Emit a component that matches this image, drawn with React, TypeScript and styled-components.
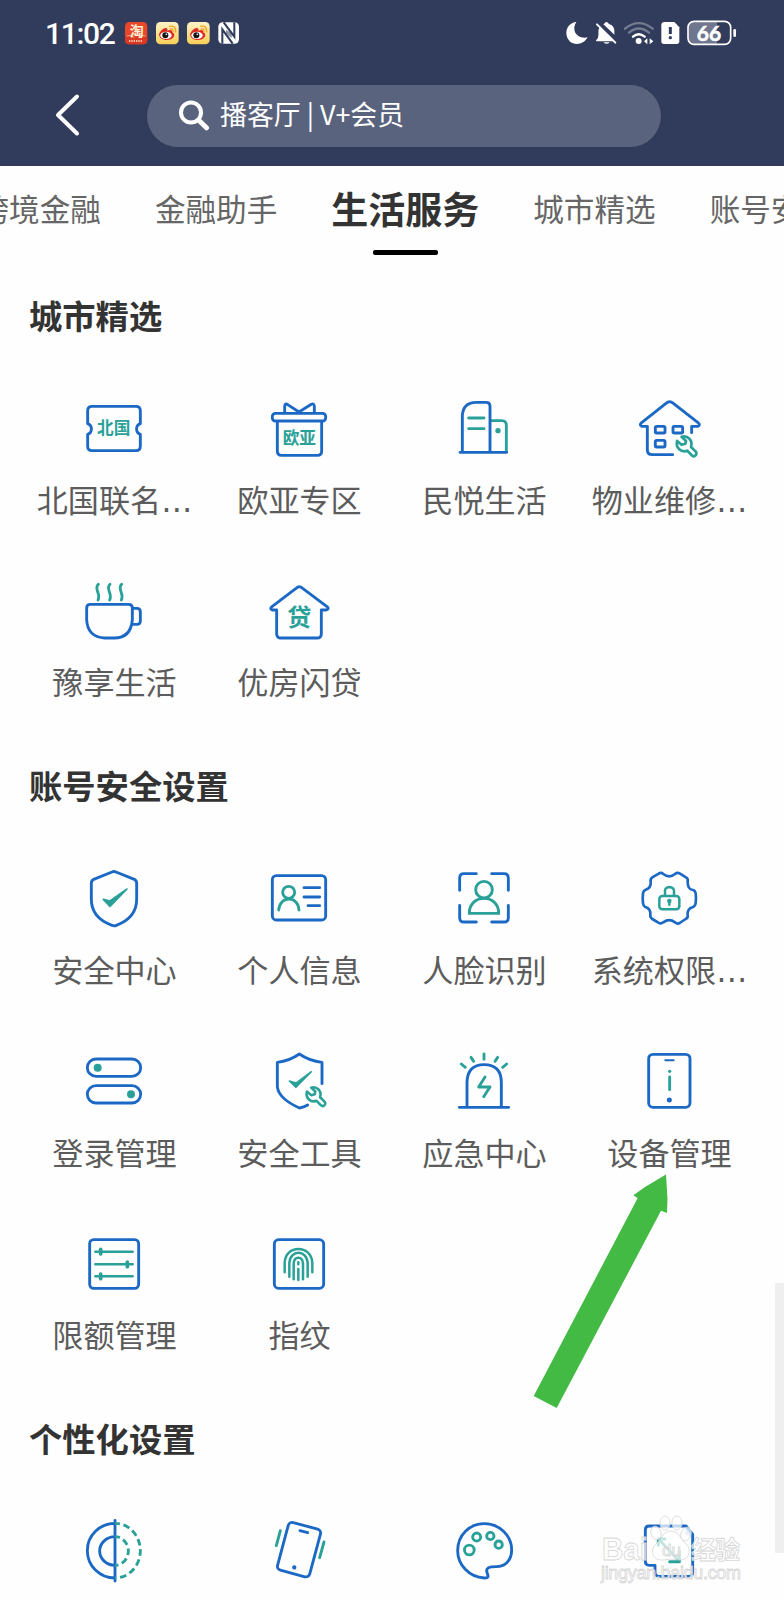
import React from "react";
import styled, { createGlobalStyle } from "styled-components";

const BLUE = "#1b69c5";
const TEAL = "#2aa198";
const CJK = '"Noto Sans CJK SC", sans-serif';

const GlobalStyle = createGlobalStyle`
  * { box-sizing: border-box; }
  body { margin: 0; background: #fefefe; font-family: ${CJK}; }
`;

const Screen = styled.div`
  position: relative;
  width: 784px;
  height: 1600px;
  overflow: hidden;
  background: #fefefe;
  display: flex;
  flex-direction: column;
`;

const Header = styled.header`
  flex: none;
  height: 166px;
  background: #313b5b;
`;

const StatusBar = styled.div`
  height: 66px;
  padding: 0 47px 0 45px;
  display: flex;
  align-items: center;
`;

const Clock = styled.span`
  width: 80px;
  padding-top: 1px;
  font: 500 30px/30px Roboto, sans-serif;
  letter-spacing: -1.3px;
  color: #fff;
`;

const Group = styled.div<{ $gap: number }>`
  display: flex;
  align-items: center;
  gap: ${(p) => p.$gap}px;
`;

const RightGroup = styled(Group)`
  margin-left: auto;
`;

const Art = styled.svg`
  display: block;
  flex: none;
`;

const SearchRow = styled.div`
  display: flex;
  align-items: center;
  padding: 19px 0 0 51px;
`;

const BackButton = styled.button`
  width: 96px;
  height: 62px;
  padding: 0;
  border: 0;
  background: none;
`;

const SearchPill = styled.div`
  width: 514px;
  height: 62px;
  border-radius: 31px;
  background: #5a637d;
  display: flex;
  align-items: center;
  padding-left: 31px;
  gap: 10px;
  color: #fff;
  font-size: 26.9px;
  line-height: 40px;
  white-space: pre;
`;

const Query = styled.span`
  padding-bottom: 4px;
`;

const Tabs = styled.nav`
  flex: none;
  height: 125.3px;
  margin-left: -21.5px;
  display: flex;
  gap: 54px;
  white-space: nowrap;
`;

const Tab = styled.div<{ $active?: boolean }>`
  flex: none;
  display: flex;
  flex-direction: column;
  align-items: center;
  font-size: ${(p) => (p.$active ? 37 : 30.6)}px;
  font-weight: ${(p) => (p.$active ? 700 : 400)};
  line-height: 84px;
  color: ${(p) => (p.$active ? "#333" : "#666")};
  &::after {
    content: "";
    display: ${(p) => (p.$active ? "block" : "none")};
    width: 65px;
    height: 5px;
    border-radius: 2px;
    background: #000;
  }
`;

const Section = styled.section`
  flex: none;
  padding: 3.3px 22px 0;
`;

const SectionTitle = styled.h2`
  margin: 0 0 61.5px 7px;
  font-size: 33.3px;
  line-height: 40px;
  font-weight: 700;
  color: #333;
`;

const Grid = styled.div`
  display: grid;
  grid-template-columns: repeat(4, 185px);
  grid-auto-rows: 182.7px;
`;

const Entry = styled.div`
  display: flex;
  flex-direction: column;
  align-items: center;
  gap: 18.6px;
`;

const Label = styled.div`
  height: 40px;
  font-size: 31.1px;
  line-height: 40px;
  white-space: nowrap;
  color: #5c5c5c;
`;

const Dots = styled.span`
  font-family: "DejaVu Sans", sans-serif;
`;

const Overlay = styled.svg`
  position: absolute;
  left: 0;
  top: 0;
  pointer-events: none;
`;

const ScrollThumb = styled.div`
  position: absolute;
  right: 0;
  top: 1283px;
  width: 9px;
  height: 270px;
  background: #efefef;
`;

const Glyph = ({ x, y, children }: { x: number; y: number; children: React.ReactNode }) => (
  <Art
    width="64"
    height="64"
    viewBox={`${x + 3} ${y} 192 192`}
    fill="none"
    stroke={BLUE}
    strokeWidth="8.6"
    strokeLinecap="round"
    strokeLinejoin="round"
    overflow="visible"
  >
    {children}
  </Art>
);

const Word = ({ x, y, size, children }: { x: number; y: number; size: number; children: string }) => (
  <text x={x} y={y} fontSize={size} fontWeight="700" fontFamily={CJK} fill={TEAL} stroke="none" textAnchor="middle">
    {children}
  </text>
);

const wrench =
  "M846 171 C866 166 882 182 876 203 L890 217 A8 8 0 0 1 879 230 L864 215 C845 222 826 206 832 184 L846 196 L858 193 L860 184 Z";

const icons: Record<string, React.ReactNode> = {
  ticket: (
    <Glyph x={186} y={48}>
      <path d="M216 79H348Q361 79 361 92V131A17 17 0 0 0 361 163V199Q361 212 348 212H216Q203 212 203 199V163A17 17 0 0 0 203 131V92Q203 79 216 79Z" />
      <Word x={281} y={163} size={50}>北国</Word>
    </Glyph>
  ),
  gift: (
    <Glyph x={741} y={48}>
      <rect x="757" y="100" width="160" height="23" rx="9" />
      <path d="M772 124V213Q772 226 785 226H892Q905 226 905 213V124M794 97V79Q795 68 803 74L837 96L874 73Q882 69 883 79V97" />
      <Word x={838} y={192} size={50}>欧亚</Word>
    </Glyph>
  ),
  building: (
    <Glyph x={156} y={48}>
      <path stroke={TEAL} d="M274 122H305Q319 122 319 136V214M206 114H252M206 146H252" />
      <circle cx="294" cy="152" r="8" fill={TEAL} stroke="none" />
      <path d="M187 217V107Q189 67 229 67H258Q270 67 270 79V217M180 217H320" />
    </Glyph>
  ),
  repair: (
    <Glyph x={711} y={48}>
      <path d="M818 224H758Q742 224 742 209V139H725Q717 135 725 128L798 70Q809 61 820 70L894 128Q903 135 893 139H875V158" />
      <rect x="766" y="139" width="29" height="20" rx="4" />
      <rect x="819" y="139" width="29" height="20" rx="4" />
      <rect x="766" y="181" width="29" height="20" rx="4" />
      <path stroke={TEAL} transform="translate(41 8) scale(.95)" d={wrench} />
    </Glyph>
  ),
  cup: (
    <Glyph x={186} y={56}>
      <path d="M211 132H326Q337 132 337 143V179Q332 233 283 233H254Q203 230 200 179V143Q200 132 211 132ZM338 144H351Q361 144 361 154V182Q361 192 351 192H337" />
      <path stroke={TEAL} d="M235 72C220 87 244 98 234 119M270 72C255 87 279 98 269 119M305 72C290 87 314 98 304 119" />
    </Glyph>
  ),
  loan: (
    <Glyph x={741} y={56}>
      <path d="M770 149H757Q748 145 756 139L828 84Q838 75 848 84L921 139Q929 145 919 149H904V220Q904 233 891 233H783Q770 233 770 220Z" />
      <Word x={838} y={196} size={72}>贷</Word>
    </Glyph>
  ),
  shield: (
    <Glyph x={186} y={50}>
      <path d="M276 68Q282 65 288 68L343 90Q350 94 350 102V150Q350 206 289 228Q282 231 276 228Q214 206 214 150V102Q214 94 221 90Z" />
      <path d="M250 150L270 171L321 119L270 155Z" fill={TEAL} stroke={TEAL} strokeWidth="5" />
    </Glyph>
  ),
  idcard: (
    <Glyph x={741} y={50}>
      <rect x="757" y="79" width="160" height="133" rx="12" />
      <path d="M852 115H899M852 143H899M864 169H899" />
      <g stroke={TEAL}>
        <circle cx="806" cy="129" r="18" />
        <path d="M776 182C780 138 834 138 837 182" />
      </g>
    </Glyph>
  ),
  face: (
    <Glyph x={156} y={50}>
      <path d="M179 123V86Q179 73 192 73H229M275 73H312Q325 73 325 86V123M325 168V205Q325 218 312 218H275M229 218H192Q179 218 179 205V168" />
      <g stroke={TEAL} strokeLinejoin="miter">
        <circle cx="252" cy="121" r="25" />
        <path d="M208 192C207 132 297 132 296 192Z" />
      </g>
    </Glyph>
  ),
  gear: (
    <Glyph x={711} y={50}>
      <path strokeWidth="8" d="M776 73Q783 68 790 74Q808 88 825 74Q832 68 840 73L858 84Q865 88 863 96Q862 120 879 122Q885 123 887 132Q889 147 887 162Q885 171 879 173Q861 178 863 197Q865 205 857 209L839 221Q832 225 825 219Q808 206 790 219Q783 225 775 220L757 209Q750 205 751 197Q753 178 736 173Q730 170 729 162Q727 147 729 132Q731 123 737 121Q754 116 752 97Q750 89 757 84Z" />
      <g stroke={TEAL} strokeWidth="7.5">
        <rect x="778" y="140" width="60" height="40" rx="9" />
        <path d="M795 139V124Q796 114 808 113Q821 114 822 124V139M808 156V166" />
        <circle cx="808" cy="155" r="3" />
      </g>
    </Glyph>
  ),
  toggles: (
    <Glyph x={186} y={58}>
      <rect x="202" y="88" width="160" height="52" rx="26" />
      <rect x="202" y="168" width="160" height="52" rx="26" />
      <circle cx="233" cy="114" r="12" fill={TEAL} stroke="none" />
      <circle cx="333" cy="194" r="12" fill={TEAL} stroke="none" />
    </Glyph>
  ),
  shieldTool: (
    <Glyph x={741} y={58}>
      <path d="M906 162V98Q869 94 838 73Q808 94 772 98V163Q768 203 838 235Q852 233 863 226" />
      <path d="M808 154L828 173L874 126L828 160Z" fill={TEAL} stroke={TEAL} strokeWidth="4.5" />
      <path stroke={TEAL} transform="translate(112 20) scale(.9)" d={wrench} />
    </Glyph>
  ),
  siren: (
    <Glyph x={156} y={58}>
      <path d="M201 231V157Q203 105 252 105Q303 105 304 157V231M178 233H326" />
      <path stroke={TEAL} d="M252 73V89M213 83L221 95M293 83L285 95M184 103L196 113M320 103L308 113M255 142L236 172H270L251 201" />
    </Glyph>
  ),
  device: (
    <Glyph x={711} y={58}>
      <rect x="746" y="74" width="124" height="159" rx="13" />
      <path strokeWidth="6" d="M796 92H821" />
      <circle cx="808" cy="211" r="7.5" fill={BLUE} stroke="none" />
      <circle cx="809" cy="125" r="5" fill={TEAL} stroke="none" />
      <path stroke={TEAL} d="M809 142V180" />
    </Glyph>
  ),
  limits: (
    <Glyph x={186} y={36}>
      <rect x="209" y="59" width="147" height="146" rx="12" />
      <g stroke={TEAL} strokeWidth="7.5">
        <path d="M226 95H338M226 133H338M226 169H338" />
        <path strokeWidth="11" d="M242 88V102M322 126V140M242 162V176" />
      </g>
    </Glyph>
  ),
  finger: (
    <Glyph x={741} y={36}>
      <rect x="763" y="59" width="148" height="146" rx="13" />
      <path stroke={TEAL} strokeWidth="7.5" d="M794 157V128C796 73 874 73 877 128V157M808 170V129C810 88 861 88 863 129V170M821 178V130C823 108 847 108 849 130V178M835 147V180M835 127V133" />
    </Glyph>
  ),
  contrast: (
    <Glyph x={0} y={0}>
      <path d="M99 4V186M99 13A83 82 0 0 0 99 177M99 53A46 43 0 0 0 99 139" />
      <path stroke={TEAL} strokeLinecap="butt" strokeDasharray="20 11" strokeDashoffset="5" d="M99 13A76 82 0 0 1 99 177M99 53A40 43 0 0 1 99 139" />
    </Glyph>
  ),
  shake: (
    <Glyph x={0} y={0}>
      <g transform="rotate(15 96 92)">
        <rect x="46" y="18" width="100" height="148" rx="12" />
        <path d="M84 36H108" />
        <circle cx="96" cy="147" r="6.5" fill={BLUE} stroke="none" />
      </g>
      <path stroke={TEAL} d="M40 35L28 80M171 69L158 116" />
    </Glyph>
  ),
  palette: (
    <Glyph x={0} y={0}>
      <path d="M107 167C111 176 104 177 97 177C51 175 17 137 17 95C17 48 53 14 97 14C143 14 179 51 179 93C179 126 157 143 133 143C110 143 103 147 104 156Z" />
      <g stroke={TEAL}>
        <circle cx="52" cy="93" r="14.5" />
        <circle cx="74" cy="54" r="12" />
        <circle cx="115" cy="51" r="11" />
        <circle cx="140" cy="77" r="11" />
      </g>
    </Glyph>
  ),
  resize: (
    <Glyph x={0} y={0}>
      <path d="M145 20V42Q145 50 165 52Z" fill="#a9cbee" stroke="none" />
      <path d="M37 21H147L167 46V160Q167 172 155 172H66Q54 172 54 160V139H37Q25 139 25 127V33Q25 21 37 21Z" />
      <path stroke={TEAL} strokeWidth="9" d="M64 79V60H84M68 64L123 122M127 97V128H98" />
    </Glyph>
  ),
};

const EntryItem = ({ icon, name, cut }: { icon: string; name: string; cut?: boolean }) => (
  <Entry>
    {icons[icon]}
    <Label>
      {name}
      {cut && <Dots>…</Dots>}
    </Label>
  </Entry>
);

const sections: { title: string; items: [string, string, boolean?][] }[] = [
  {
    title: "城市精选",
    items: [
      ["ticket", "北国联名", true],
      ["gift", "欧亚专区"],
      ["building", "民悦生活"],
      ["repair", "物业维修", true],
      ["cup", "豫享生活"],
      ["loan", "优房闪贷"],
    ],
  },
  {
    title: "账号安全设置",
    items: [
      ["shield", "安全中心"],
      ["idcard", "个人信息"],
      ["face", "人脸识别"],
      ["gear", "系统权限", true],
      ["toggles", "登录管理"],
      ["shieldTool", "安全工具"],
      ["siren", "应急中心"],
      ["device", "设备管理"],
      ["limits", "限额管理"],
      ["finger", "指纹"],
    ],
  },
  {
    title: "个性化设置",
    items: [
      ["contrast", ""],
      ["shake", ""],
      ["palette", ""],
      ["resize", ""],
    ],
  },
];

const Weibo = () => (
  <Art width="23" height="23" viewBox="0 0 69 69">
    <defs>
      <linearGradient id="wb" x1="0" y1="0" x2="0" y2="1">
        <stop offset="0" stopColor="#fff3c8" />
        <stop offset="1" stopColor="#f8ce55" />
      </linearGradient>
    </defs>
    <rect width="68" height="67" rx="13" fill="url(#wb)" />
    <path d="M9 38C11 26 25 16 31 18Q36 20 34 26Q49 21 49 31Q58 36 53 45C45 58 12 57 9 38Z" fill="#dc2a25" />
    <ellipse cx="30" cy="40" rx="17" ry="11" fill="#fff" />
    <circle cx="28" cy="40" r="9" fill="#151515" />
    <circle cx="31" cy="37" r="2.5" fill="#fff" />
    <path d="M41 13Q60 9 59 30M43 21Q52 19 51 29" fill="none" stroke="#f0a12c" strokeWidth="4" strokeLinecap="round" />
  </Art>
);

const App = () => (
  <Screen>
    <GlobalStyle />
    <Header>
      <StatusBar>
        <Clock>11:02</Clock>
        <Group $gap={8}>
          <Art width="23" height="23" viewBox="0 0 69 69">
            <rect width="67" height="67" rx="13" fill="#e9472a" />
            <path d="M0 42Q16 30 33 45Q52 31 67 42V55Q67 67 54 67H13Q0 67 0 54Z" fill="#d93822" />
            <path d="M5 42Q18 36 28 47M62 42Q49 37 41 47" stroke="#f8b08c" strokeWidth="3" fill="none" />
            <text x="35" y="43" fontSize="42" fontWeight="700" fontFamily={CJK} fill="#fff0d2" textAnchor="middle">淘</text>
            <path d="M12 57H54" stroke="#f9c9a8" strokeWidth="6" strokeDasharray="4 3" />
          </Art>
          <Weibo />
          <Weibo />
          <Art width="23" height="23" viewBox="3 0 69 69" fill="#fff">
            <rect x="4" y="1" width="62" height="64" rx="13" />
            <path d="M16 65V22L47 65M52 1V44L20 1" fill="none" stroke="#313b5b" strokeWidth="6" />
            <path d="M27 23L44 34V48L27 35Z" fill="#313b5b" opacity=".55" />
          </Art>
        </Group>
        <RightGroup $gap={0}>
          <Art width="171" height="26" viewBox="524 60 513 78">
            <path d="M555 66C538 93 559 118 589 112C570 145 526 135 525 99C525 80 539 67 555 66Z" fill="#fff" />
            <path d="M615 121Q622 115 622 106V94Q622 75 638 72Q645 60 653 72Q669 76 669 94V106Q669 115 675 121V124H615Z" fill="#fff" />
            <path d="M612 60L679 124" stroke="#313b5b" strokeWidth="15" />
            <path d="M622 86L658 123H615V121Q622 115 622 106Z" fill="#fff" />
            <path d="M617 73L672 128" stroke="#fff" strokeWidth="6" strokeLinecap="round" />
            <path d="M636 127H655Q647 136 636 127Z" fill="#fff" />
            <g fill="none" strokeWidth="7" strokeLinecap="round">
              <path d="M701 86Q742 53 784 86" stroke="#747b91" />
              <path d="M713 98Q742 73 773 98" stroke="#747b91" />
              <path d="M725 110Q742 95 760 110" stroke="#fff" />
            </g>
            <circle cx="742" cy="123" r="9" fill="#fff" />
            <path d="M768 115V133L758 124ZM775 115L786 124L775 133Z" fill="#fff" />
            <path d="M820 66H849L864 82V124Q864 132 856 132H818Q810 132 810 124V76Q810 66 820 66Z" fill="#fff" />
            <path d="M837 81V102" stroke="#313b5b" strokeWidth="9" />
            <circle cx="837" cy="113" r="5" fill="#313b5b" />
            <path d="M905 66H977V132H905Q891 132 891 118V80Q891 66 905 66Z" fill="#6f768d" />
            <rect x="890" y="64" width="128" height="69" rx="18" fill="none" stroke="#fff" strokeWidth="5" />
            <path d="M1030 91V107" stroke="#fff" strokeWidth="8" strokeLinecap="round" />
            <text x="953" y="122" fontSize="63" fontWeight="700" fontFamily="Lato, sans-serif" fill="#fff" stroke="#fff" strokeWidth="1.5" textAnchor="middle">66</text>
          </Art>
        </RightGroup>
      </StatusBar>
      <SearchRow>
        <BackButton>
          <Art width="34" height="62" viewBox="0 0 34 62" fill="none" stroke="#fff" strokeWidth="4" strokeLinecap="round" strokeLinejoin="round">
            <path d="M26 11.5L7 30L26 48.5" />
          </Art>
        </BackButton>
        <SearchPill>
          <Art width="32" height="32" viewBox="0 0 32 32" fill="none" stroke="#fff" strokeLinecap="round">
            <circle cx="13" cy="12.5" r="10" strokeWidth="4" />
            <path d="M21 20.5L28.5 27.8" strokeWidth="5" />
          </Art>
          <Query>播客厅 | V+会员</Query>
        </SearchPill>
      </SearchRow>
    </Header>
    <Tabs>
      <Tab>跨境金融</Tab>
      <Tab>金融助手</Tab>
      <Tab $active>生活服务</Tab>
      <Tab>城市精选</Tab>
      <Tab>账号安全</Tab>
    </Tabs>
    {sections.map((s) => (
      <Section key={s.title}>
        <SectionTitle>{s.title}</SectionTitle>
        <Grid>
          {s.items.map(([icon, name, cut]) => (
            <EntryItem key={icon} icon={icon} name={name} cut={cut} />
          ))}
        </Grid>
      </Section>
    ))}
    <ScrollThumb />
    <Overlay width="784" height="1600" viewBox="0 0 784 1600">
      <path
        d="M666 1174.5L667.5 1199L667 1213L661 1210.7L556.7 1408L533.7 1396L637.7 1198L633.3 1195.3L645 1187Z"
        fill="#43ba43"
      />
      <g fill="#fff" fillOpacity=".72" stroke="#d6d6d6" strokeWidth=".8" fontFamily='"Liberation Sans", sans-serif'>
        <text x="602" y="1560" fontSize="31" fontWeight="700" textLength="46" lengthAdjust="spacingAndGlyphs">Bai</text>
        <ellipse cx="656" cy="1533" rx="5" ry="7" transform="rotate(-20 656 1533)" />
        <ellipse cx="665" cy="1523" rx="5" ry="7" />
        <ellipse cx="677" cy="1523" rx="5" ry="7" />
        <ellipse cx="686" cy="1534" rx="5" ry="7" transform="rotate(20 686 1534)" />
        <path d="M671 1531C679 1531 681 1540 686 1544C693 1551 688 1561 679 1560Q671 1558 663 1560C653 1561 649 1551 656 1544C661 1540 663 1531 671 1531Z" />
        <text x="662" y="1556" fontSize="17">du</text>
        <text x="691" y="1559" fontSize="25" textLength="49" fontWeight="700" fontFamily={CJK}>经验</text>
        <text x="601" y="1579" fontSize="18" textLength="140">jingyan.baidu.com</text>
      </g>
    </Overlay>
  </Screen>
);

export default App;
